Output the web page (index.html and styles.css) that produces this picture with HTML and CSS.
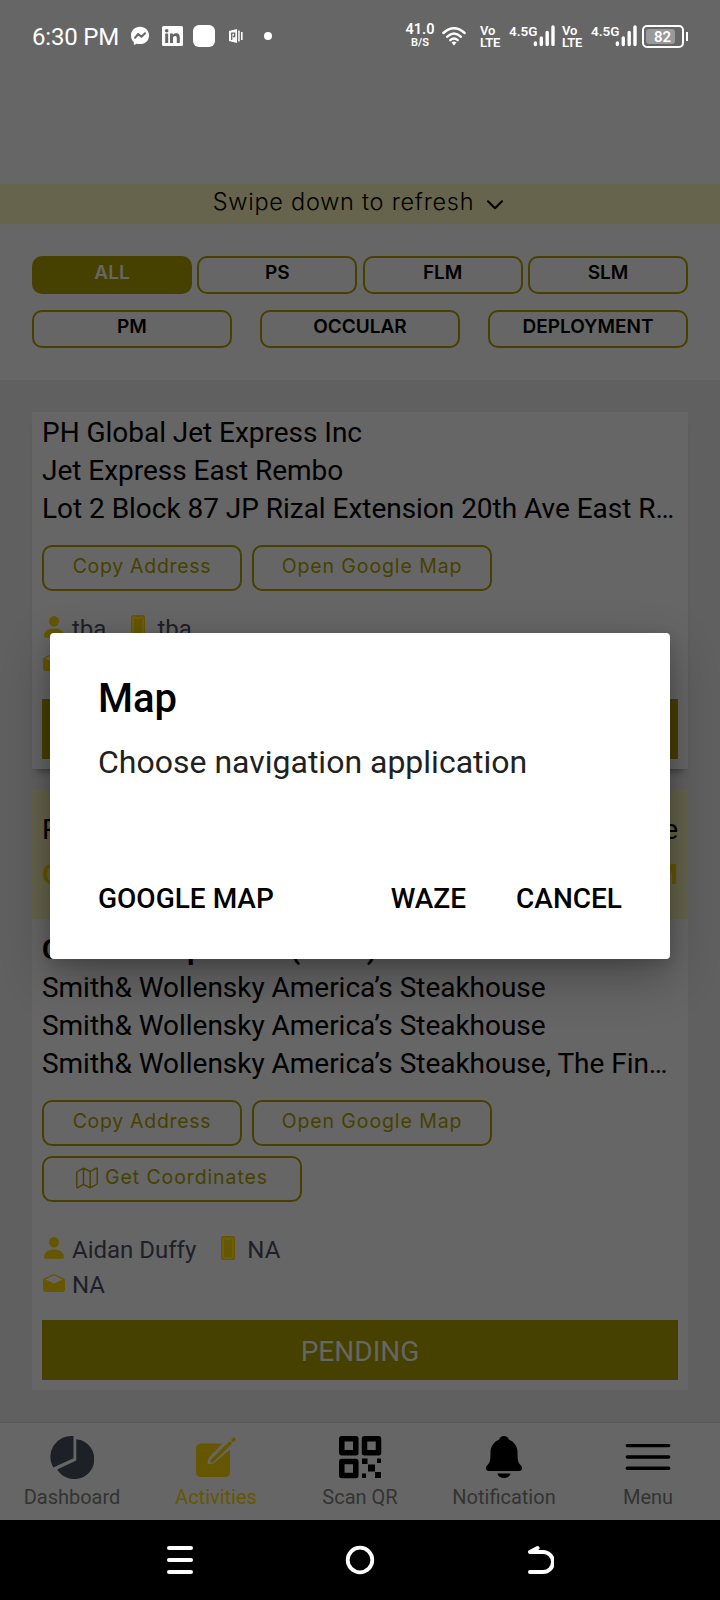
FILE: index.html
```html
<!DOCTYPE html>
<html lang="en">
<head>
<meta charset="utf-8">
<title>Activities</title>
<link rel="stylesheet" href="styles.css">
</head>
<body>
<div class="screen">
  <header class="status">
    <span class="time">6:30 PM</span>
    <svg class="s-msg" width="20" height="20" viewBox="0 0 20 20"><path fill="#fff" d="M10 .8C4.700.8 1 4.600 1 9.400c0 2.600 1 4.900 2.800 6.500V19l2.900-1.300c1 .3 2.200.4 3.300.4 5.300 0 9-3.800 9-8.700S15.300.8 10 .8z"/><path fill="none" stroke="#666" stroke-width="2" stroke-linejoin="round" stroke-linecap="round" d="M5 11.800 8.200 8l3.300 2.700L15 7.300"/></svg>
    <svg class="s-in" width="21" height="20" viewBox="0 0 21 20"><rect width="21" height="20" rx="1.500" fill="#fff"/><g fill="#666"><circle cx="4.700" cy="4.700" r="1.800"/><path d="M3.200 7.600h3V17h-3zM8 7.600h2.900v1.300c.5-.9 1.600-1.600 3.100-1.600 3 0 3.800 1.900 3.800 4.600V17h-3v-4.500c0-1.300-.1-2.500-1.700-2.500S11 11.200 11 12.500V17H8z"/></g></svg>
    <span class="s-square"></span>
    <svg class="s-pub" width="14" height="14" viewBox="0 0 14 14"><path fill="#fff" d="M0 2 8 0v14l-8-2zM9.200 1.500h1.500v11H9.200zM12 3h1.600v8H12z"/><path fill="none" stroke="#666" stroke-width="1.300" d="M2.700 11V4.200h3v3.300H3.800"/></svg>
    <span class="s-dot"></span>
    <span class="speed"><b>41.0</b><i>B/S</i></span>
    <svg class="s-wifi" width="24" height="19" viewBox="0 0 24 19"><g fill="none" stroke="#fff" stroke-width="2.400" stroke-linecap="round"><path d="M1.400 6Q12-3.600 22.600 6"/><path d="M5 9.800q7-6.400 14 0"/><path d="M8.300 13.200q3.700-3.200 7.400 0"/></g><path fill="#fff" d="M9.500 15.400q2.500-1.900 5 0L12 18.600z"/></svg>
    <span class="volte">Vo<br>LTE</span>
    <span class="net">4.5G</span>
    <svg class="s-bars" width="22" height="22" viewBox="0 0 22 22"><path stroke="#fff" stroke-width="3.400" stroke-linecap="round" d="M2.400 18v1.600M8.300 13v6.600M14.200 7.500v12.100M20 2v17.600"/></svg>
    <span class="volte v2">Vo<br>LTE</span>
    <span class="net">4.5G</span>
    <svg class="s-bars" width="22" height="22" viewBox="0 0 22 22"><path stroke="#fff" stroke-width="3.400" stroke-linecap="round" d="M2.400 18v1.600M8.300 13v6.600M14.200 7.500v12.100M20 2v17.600"/></svg>
    <span class="battery"><span>82</span></span><span class="cap"></span>
  </header>

  <div class="refresh"><span>Swipe down to refresh</span>
    <svg width="16" height="10" viewBox="0 0 16 10"><path fill="none" stroke="#000" stroke-width="2" stroke-linecap="round" stroke-linejoin="round" d="M1 1.200l7 7 7-7"/></svg>
  </div>

  <section class="filters">
    <div class="row four"><button class="chip on">ALL</button><button class="chip">PS</button><button class="chip">FLM</button><button class="chip">SLM</button></div>
    <div class="row three"><button class="chip">PM</button><button class="chip">OCCULAR</button><button class="chip">DEPLOYMENT</button></div>
  </section>

  <main class="list">
    <article class="card first">
      <p class="line">PH Global Jet Express Inc</p>
      <p class="line">Jet Express East Rembo</p>
      <p class="line">Lot 2 Block 87 JP Rizal Extension 20th Ave East R…</p>
      <div class="actions"><button class="act copy">Copy Address</button><button class="act open">Open Google Map</button></div>
      <div class="contacts">
        <div class="contact">
          <svg class="i-user" width="20" height="22" viewBox="0 0 20 22"><path fill="#665600" d="M10 0a5 5.200 0 0 1 0 10.500A5 5.200 0 0 1 10 0zM0 20c0-4.500 4-7.500 10-7.500s10 3 10 7.500c0 1-.6 1.700-1.500 1.700h-17C.6 21.700 0 21 0 20z"/></svg><span>tba</span>
          <svg class="i-phone" width="14" height="24" viewBox="0 0 14 24"><rect width="14" height="24" rx="2.500" fill="#665600"/><path fill="none" stroke="#807023" stroke-width=".7" d="M2 3.500Q2 2 3.500 2q.8 1 1.500 1h4q.7 0 1.500-1Q12 2 12 3.500v17q0 1.500-1.500 1.500h-7Q2 22 2 20.500z"/></svg><span>tba</span>
        </div>
        <div class="contact">
          <svg class="i-mail" width="22" height="18" viewBox="0 0 22 18"><path fill="#665600" d="M11 0l9.600 4.200Q22 5 22 6.500V15q0 3-3 3H3q-3 0-3-3V6.500Q0 5 1.400 4.200z"/><path fill="#666" d="M11 1.300 19.800 5.600 11 9.600 2.200 5.600z"/></svg><span>tba</span>
        </div>
      </div>
      <div class="pending">PENDING</div>
    </article>

    <article class="card second">
      <div class="banner">
        <div class="pair"><span>Requested Date</span><span>Schedule Date</span></div>
        <div class="pair gold"><span>Open</span><span>8:00 AM</span></div>
      </div>
      <p class="line strong">Occular Inspection (Done)</p>
      <p class="line">Smith&amp; Wollensky America’s Steakhouse</p>
      <p class="line">Smith&amp; Wollensky America’s Steakhouse</p>
      <p class="line">Smith&amp; Wollensky America’s Steakhouse, The Fin…</p>
      <div class="actions"><button class="act copy">Copy Address</button><button class="act open">Open Google Map</button>
        <button class="act coords"><svg width="22" height="22" viewBox="0 0 22 22"><path fill="none" stroke="#474100" stroke-width="1.400" stroke-linejoin="round" d="M7.500 1.200 1.500 4.500Q.8 5 .8 5.700V20q0 1.200 1 .6l5.700-3.300 6.700 3.500 6-3.300q1-.6 1-1.300V1.800q0-1-1-.6l-6 3.300zM7.500 1.200v16.100M14.200 4.500v16.300"/></svg>Get Coordinates</button></div>
      <div class="contacts">
        <div class="contact">
          <svg class="i-user" width="20" height="22" viewBox="0 0 20 22"><path fill="#665600" d="M10 0a5 5.200 0 0 1 0 10.500A5 5.200 0 0 1 10 0zM0 20c0-4.500 4-7.500 10-7.500s10 3 10 7.500c0 1-.6 1.700-1.500 1.700h-17C.6 21.700 0 21 0 20z"/></svg><span>Aidan Duffy</span>
          <svg class="i-phone" width="14" height="24" viewBox="0 0 14 24"><rect width="14" height="24" rx="2.500" fill="#665600"/><path fill="none" stroke="#807023" stroke-width=".7" d="M2 3.500Q2 2 3.500 2q.8 1 1.500 1h4q.7 0 1.500-1Q12 2 12 3.500v17q0 1.500-1.500 1.500h-7Q2 22 2 20.500z"/></svg><span>NA</span>
        </div>
        <div class="contact">
          <svg class="i-mail" width="22" height="18" viewBox="0 0 22 18"><path fill="#665600" d="M11 0l9.600 4.200Q22 5 22 6.500V15q0 3-3 3H3q-3 0-3-3V6.500Q0 5 1.400 4.200z"/><path fill="#666" d="M11 1.300 19.800 5.600 11 9.600 2.200 5.600z"/></svg><span>NA</span>
        </div>
      </div>
      <div class="pending">PENDING</div>
    </article>
  </main>

  <nav class="tabs">
    <a class="tab"><svg width="44" height="44" viewBox="0 0 44 44"><g fill="#1e2028"><path d="M23.500 1v22.200L3.200 32.500A21 21 0 0 1 23.500 1z"/><path d="M26.300 4.200A20 20 0 1 1 7.200 34.500L26.300 25.500z"/></g></svg>Dashboard</a>
    <a class="tab active"><svg width="44" height="44" viewBox="0 0 44 44"><path fill="#665600" d="M8 8.500h20.500L15.300 22q-2 2.700-1.800 6.500 4 1.500 7-.7L36 14.500V37q0 5-5 5H7q-5 0-5-5V13.500q0-5 6-5z"/><path fill="none" stroke="#665600" stroke-width="3.500" stroke-linecap="round" d="M18 26 36 8.300M39 5.200l1-1"/></svg>Activities</a>
    <a class="tab"><svg width="44" height="44" viewBox="0 0 44 44"><path fill="none" stroke="#000" stroke-width="5.500" stroke-linejoin="round" d="M3.800 3.800h14v14h-14zM26.500 3.800h14v14h-14zM3.800 26.500h14v14h-14z"/><path fill="#000" d="M24 23.500h5.500V29H24zM39 23.500h4v4.500h-4zM30 29.500h7v7h-7zM24 38.500h4v4.500h-4zM37 37h6v6h-6z"/></svg>Scan QR</a>
    <a class="tab"><svg width="44" height="44" viewBox="0 0 44 44"><path fill="#000" d="M22 1c2.400 0 4.300 1.400 4.800 3.600C32 6.700 35.500 11.500 35.500 17c0 9 .5 10.500 3.500 13.500 2 2.200 1.200 5.500-2 5.500H7c-3.200 0-4-3.300-2-5.500C8 27.500 8.500 26 8.500 17c0-5.500 3.500-10.300 8.700-12.400C17.700 2.400 19.600 1 22 1zM15.500 38.500h13C28 41.300 25.500 43 22 43s-6-1.700-6.500-4.500z"/></svg>Notification</a>
    <a class="tab"><svg width="46" height="44" viewBox="0 0 46 44"><path stroke="#000" stroke-width="3.400" stroke-linecap="round" d="M2.300 10.600h41.400M2.300 22h41.400M2.300 33.200h41.400"/></svg>Menu</a>
  </nav>

  <footer class="sysnav">
    <svg width="28" height="30" viewBox="0 0 28 30"><path stroke="#fff" stroke-width="4" stroke-linecap="round" d="M3 3h22M3 15h22M3 27h22"/></svg>
    <svg width="30" height="30" viewBox="0 0 30 30"><circle cx="15" cy="15" r="12.300" fill="none" stroke="#fff" stroke-width="3.800"/></svg>
    <svg width="28" height="30" viewBox="0 0 28 30"><path fill="none" stroke="#fff" stroke-width="4" stroke-linecap="round" stroke-linejoin="round" d="M11.500 3 4 7h13a10 10 0 0 1 0 20H4"/></svg>
  </footer>

  <div class="dialog" role="dialog">
    <h1>Map</h1>
    <p>Choose navigation application</p>
    <div class="choices"><span class="gm">GOOGLE MAP</span><span class="wz">WAZE</span><span>CANCEL</span></div>
  </div>
</div>
</body>
</html>
```
FILE: styles.css
```css
* { box-sizing: border-box; }
body { margin: 0; background: #666; }
.screen { position: relative; width: 720px; height: 1600px; overflow: hidden; display: flex; flex-direction: column; background: #666; color: #000; font-family: Roboto, sans-serif; }
p, h1 { margin: 0; }
svg { display: block; flex: none; }
button { margin: 0; padding: 0; background: none; color: inherit; }

.status { height: 184px; padding-left: 32px; display: flex; align-items: flex-start; color: #fff; flex: none; }
.time { width: 98px; font-size: 24px; line-height: 28px; letter-spacing: -.2px; margin-top: 23px; white-space: nowrap; }
.s-msg { margin-top: 26px; }
.s-in { margin: 26px 0 0 12px; }
.s-square { width: 22px; height: 22px; margin: 25px 0 0 10px; border-radius: 6px; background: #fff; }
.s-pub { margin: 29px 0 0 14px; }
.s-dot { width: 8px; height: 8px; margin: 32px 0 0 21px; border-radius: 50%; background: #fff; }
.speed { width: 30px; margin: 22px 0 0 133px; display: flex; flex-direction: column; align-items: center; }
.speed b { font-size: 14.500px; line-height: 14px; font-weight: 600; }
.speed i { font-size: 11px; line-height: 11px; font-style: normal; font-weight: 600; }
.speed b { margin-top: 1px; }
.s-wifi { margin: 27px 0 0 7px; }
.volte { width: 21px; margin: 25px 0 0 14px; font-size: 13px; line-height: 12px; font-weight: 600; letter-spacing: -.2px; }
.volte.v2 { margin-left: 7px; }
.net { width: 29px; margin: 24px 0 0 8px; font-size: 13.500px; line-height: 14px; font-weight: 600; }
.s-bars { margin: 25px 0 0 -5px; }
.battery { width: 42px; height: 23px; margin: 25px 0 0 5px; padding: 2px; border: 2px solid #fff; border-radius: 5px; }
.battery span { display: block; width: 29px; height: 15px; padding-left: 8px; background: #999; border-radius: 3px; font-size: 15px; line-height: 16px; font-weight: 600; }
.cap { width: 2px; height: 9px; margin: 32px 0 0 2px; background: #fff; }

.refresh { height: 40px; flex: none; display: flex; justify-content: center; align-items: center; gap: 13px; background: #66644c; font: 300 23.500px/36px Inter, sans-serif; letter-spacing: .75px; padding-bottom: 5px; padding-right: 4px; }
.refresh svg { margin-top: 7px; }

.filters { height: 156px; flex: none; padding: 32px 32px 0; display: flex; flex-direction: column; gap: 16px; }
.row { display: grid; }
.four { grid-template-columns: repeat(4, 160px); justify-content: space-between; }
.three { grid-template-columns: repeat(3, 200px); justify-content: space-between; }
.chip { height: 38px; border: 2px solid #474100; border-radius: 10px; padding-bottom: 4px; font: 600 19px/30px Inter, sans-serif; }
.chip.on { background: #474100; color: #666; }

.list { flex: none; height: 1043px; padding: 32px 32px 0; background: #606060; border-bottom: 1px solid #595959; }
.card { background: #666; padding: 0 10px; }
.first { height: 357px; padding-top: 2px; margin-bottom: 20px; box-shadow: 0 7px 7px -5px rgba(0,0,0,.4); }
.second { height: 601px; }
.line { font-size: 28px; line-height: 38px; letter-spacing: -.03px; white-space: nowrap; }
.strong { font-weight: 700; letter-spacing: .3px; padding-top: 12px; }
.actions { display: flex; flex-wrap: wrap; gap: 10px; margin-top: 17px; }
.act { height: 46px; border: 2px solid #474100; border-radius: 10px; color: #474100; font: 19.500px/36px Inter, sans-serif; letter-spacing: .9px; padding-bottom: 5px; white-space: nowrap; }
.copy { width: 200px; letter-spacing: .7px; }
.open { width: 240px; }
.coords { width: 260px; display: flex; justify-content: center; align-items: center; gap: 7px; }
.coords svg { margin-top: 3px; }
.contacts { margin-top: 20px; color: #1e2028; font-size: 24px; line-height: 37px; }
.second .contacts { margin-top: 30px; }
.contact { display: flex; height: 35px; }
.i-user { margin: 5px 8px 0 2px; }
.i-phone { margin: 4px 12px 0 25px; }
.i-mail { margin: 7px 7px 0 1px; }
.pending { height: 60px; background: #474100; color: #666; font-size: 28px; line-height: 64px; text-align: center; margin-top: 18px; }
.banner { height: 130px; margin: 0 -10px; padding: 18px 10px 0; background: #66644c; }
.pair { display: flex; justify-content: space-between; font-size: 28px; line-height: 45px; }
.gold { color: #665600; font-weight: 700; }

.tabs { flex: none; height: 97px; display: grid; grid-template-columns: repeat(5, 144px); }
.tab { display: flex; flex-direction: column; align-items: center; padding-top: 12px; color: #333; font-size: 20px; line-height: 24px; gap: 6px; }
.active { color: #665600; }

.sysnav { flex: 1; background: #000; display: flex; justify-content: center; align-items: center; gap: 151px; }

.dialog { position: absolute; left: 50px; top: 633px; width: 620px; height: 326px; padding: 41px 48px 0 48px; background: #fff; border-radius: 4px; box-shadow: 0 18px 48px rgba(0,0,0,.3), 0 4px 14px rgba(0,0,0,.15); }
.dialog h1 { font-size: 40px; line-height: 50px; font-weight: 500; }
.dialog p { font-size: 32px; line-height: 40px; color: #212121; margin-top: 18px; }
.choices { display: flex; font-size: 28px; line-height: 34px; font-weight: 500; margin-top: 100px; white-space: nowrap; }
.gm { margin-right: auto; }
.wz { margin-right: 50px; }
```
